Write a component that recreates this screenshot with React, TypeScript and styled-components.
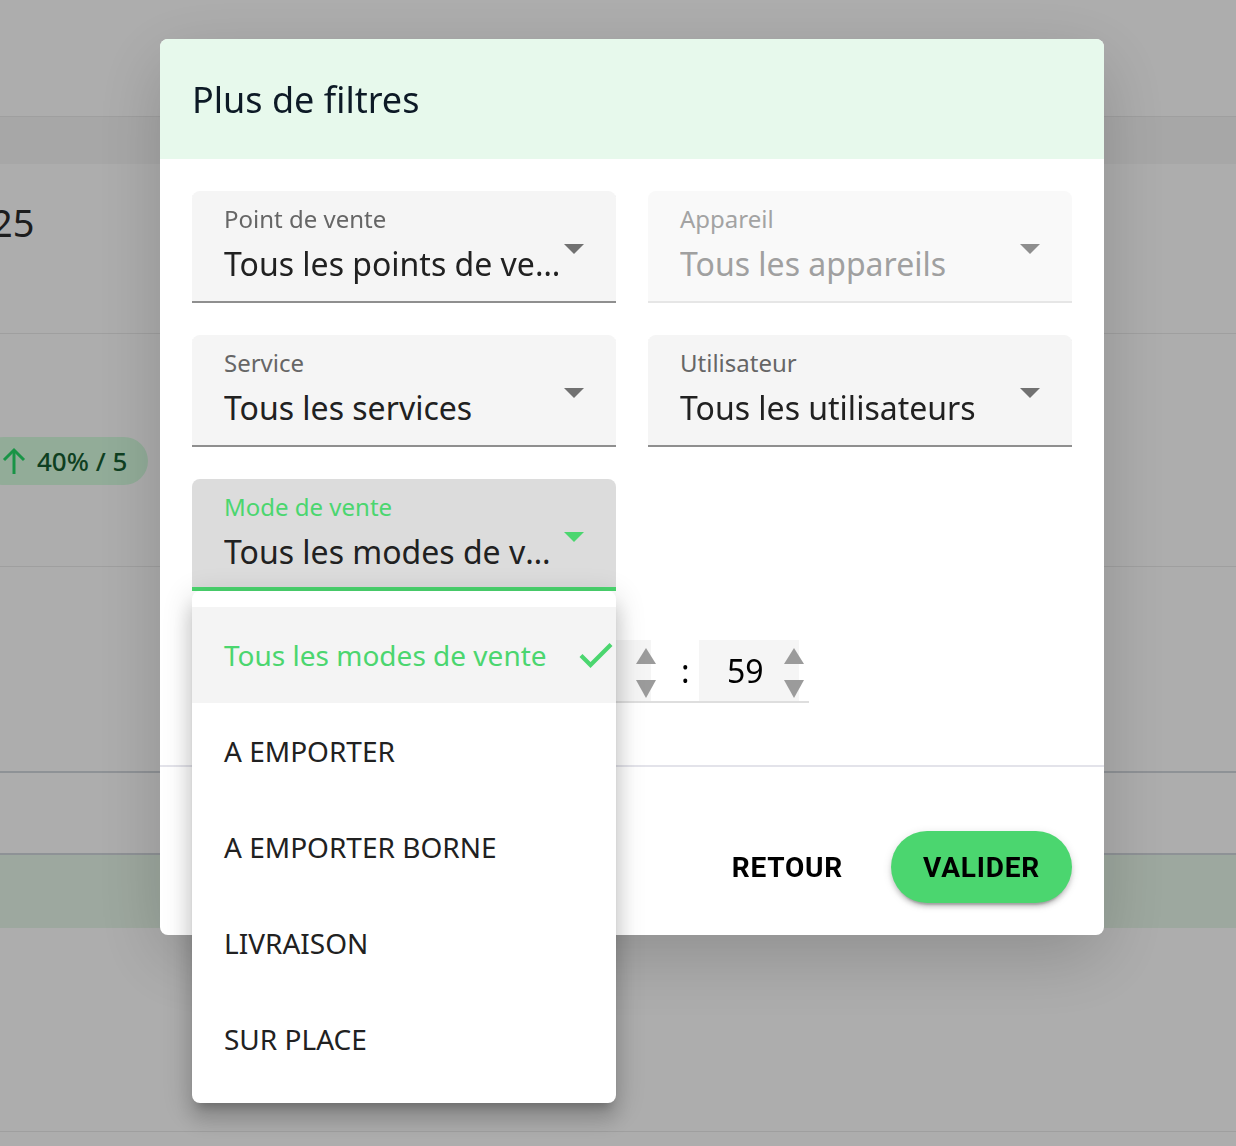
import { FC, ReactNode } from 'react';
import { styled, createGlobalStyle } from 'styled-components';

const GREEN = '#4bd66f';

type SelectState = 'idle' | 'disabled' | 'focused';

const MODES = ['Tous les modes de vente', 'A EMPORTER', 'A EMPORTER BORNE', 'LIVRAISON', 'SUR PLACE'];

const Select: FC<SelectProps> = ({ label, value, state = 'idle', children }) => (
	<Field $raised={!!children}>
		<SelectBox $state={state}>
			<SelectText>
				<Label $state={state}>{label}</Label>
				<Value $state={state}>{value}</Value>
			</SelectText>
			<Caret $state={state} />
		</SelectBox>
		{children}
	</Field>
);

const TimeInput: FC<{ value: string }> = ({ value }) => (
	<TimeBox>
		{value}
		<Spinner>
			<SpinUp />
			<SpinDown />
		</Spinner>
	</TimeBox>
);

const CheckIcon = () => (
	<svg width="34" height="26" viewBox="0 0 34 26" fill="none">
		<polyline points="2,13.5 11.5,23 32,2.5" stroke={GREEN} strokeWidth="4.2" />
	</svg>
);

const ArrowUpIcon = () => (
	<svg width="24" height="28" viewBox="0 0 24 28" fill="none">
		<polyline points="2,13 12,3 22,13" stroke="#26da68" strokeWidth="3" />
		<line x1="12" y1="3" x2="12" y2="27" stroke="#26da68" strokeWidth="3" />
	</svg>
);

export default function App() {
	return (
		<>
			<GlobalStyle />
			<Page>
				<TopBar />
				<TableHead />
				<Row $h={169}>
					<BigNumber>25</BigNumber>
				</Row>
				<Row $h={232}>
					<Badge>
						<ArrowUpIcon />
						40% / 5
					</Badge>
				</Row>
				<Row $h={204} $line="#d2d7dd" $lineW={2} />
				<Row $h={80} $line="#d2d7dd" $lineW={2} />
				<Row $h={72} $bg="#e8f8ea" />
				<Row $h={203} />
			</Page>

			<Overlay>
				<Dialog>
					<DialogHeader>
						<Title>Plus de filtres</Title>
					</DialogHeader>

					<DialogBody>
						<Select label="Point de vente" value="Tous les points de vente" />
						<Select label="Appareil" value="Tous les appareils" state="disabled" />
						<Select label="Service" value="Tous les services" />
						<Select label="Utilisateur" value="Tous les utilisateurs" />
						<Select label="Mode de vente" value="Tous les modes de vente" state="focused">
							<Menu>
								{MODES.map((mode, i) => (
									<MenuItem key={mode} $selected={i === 0}>
										{mode}
										{i === 0 && (
											<CheckWrap>
												<CheckIcon />
											</CheckWrap>
										)}
									</MenuItem>
								))}
							</Menu>
						</Select>

						<TimeRow>
							<TimeGroup>
								<TimeInput value="00" />
								<Colon>:</Colon>
								<TimeInput value="00" />
								<TimeSep>à</TimeSep>
								<TimeInput value="23" />
								<Colon>:</Colon>
								<TimeInput value="59" />
							</TimeGroup>
						</TimeRow>
					</DialogBody>

					<DialogFooter>
						<TextButton>Retour</TextButton>
						<PrimaryButton>Valider</PrimaryButton>
					</DialogFooter>
				</Dialog>
			</Overlay>
		</>
	);
}

interface SelectProps {
	label: string;
	value: string;
	state?: SelectState;
	children?: ReactNode;
}

const GlobalStyle = createGlobalStyle`
	html, body {
		margin: 0;
		padding: 0;
	}

	body {
		width: 1236px;
		height: 1146px;
		overflow: hidden;
		font-family: "Noto Sans", "Open Sans", sans-serif;
		background: #fff;
	}

	* {
		box-sizing: border-box;
	}
`;

/* page behind the modal */

const Page = styled.div`
	display: flex;
	flex-direction: column;
	height: 1146px;
	overflow: hidden;
	background: #fff;
`;

const TopBar = styled.div`
	flex: none;
	height: 117px;
	border-bottom: 1px solid #eaeaea;
`;

const TableHead = styled.div`
	flex: none;
	height: 47px;
	background: #f7f7f7;
`;

const Row = styled.div<{ $h: number; $line?: string; $lineW?: number; $bg?: string }>`
	flex: none;
	height: ${({ $h, $lineW = 1 }) => $h + $lineW}px;
	background: ${({ $bg }) => $bg ?? 'transparent'};
	border-bottom: ${({ $lineW = 1 }) => $lineW}px solid ${({ $line }) => $line ?? '#ebebeb'};
	${({ $bg }) => ($bg ? 'border-bottom: none;' : '')}
`;

const BigNumber = styled.div`
	margin: 32px 0 0 -9px;
	font-size: 38px;
	line-height: 52px;
	color: #2b2b2b;
`;

const Badge = styled.div`
	display: inline-flex;
	align-items: center;
	gap: 11px;
	height: 48px;
	margin: 103px 0 0 -20px;
	padding: 0 21px 0 22px;
	border-radius: 24px;
	background: #d7fee1;
	color: #165e31;
	font-size: 26px;
	font-weight: 500;
`;

/* modal */

const Overlay = styled.div`
	position: fixed;
	inset: 0;
	display: flex;
	align-items: flex-start;
	padding: 39px 0 0 160px;
	background: rgba(0, 0, 0, 0.32);
`;

const Dialog = styled.div`
	display: flex;
	flex-direction: column;
	width: 944px;
	height: 896px;
	border-radius: 8px;
	background: #fff;
	box-shadow: 0 22px 70px rgba(0, 0, 0, 0.18);
`;

const DialogHeader = styled.div`
	display: flex;
	align-items: center;
	flex: none;
	height: 120px;
	padding: 0 32px;
	border-radius: 8px 8px 0 0;
	background: #e7f9ec;
`;

const Title = styled.h2`
	margin: 0;
	font-size: 36px;
	font-weight: 400;
	color: #0d1a26;
`;

const DialogBody = styled.div`
	display: grid;
	grid-template-columns: 424px 424px;
	column-gap: 32px;
	row-gap: 32px;
	padding: 32px;
	border-bottom: 2px solid #e3e3ea;
`;

const Field = styled.div<{ $raised: boolean }>`
	position: relative;
	z-index: ${({ $raised }) => ($raised ? 5 : 'auto')};
`;

const SelectBox = styled.div<{ $state: SelectState }>`
	display: flex;
	align-items: center;
	height: 112px;
	border-radius: 8px 8px 0 0;
	background: ${({ $state }) =>
		$state === 'focused' ? '#dcdcdc' : $state === 'disabled' ? '#f9f9f9' : '#f5f5f5'};
	box-shadow: inset 0
		${({ $state }) =>
			$state === 'focused' ? `-4px 0 ${GREEN}` : $state === 'disabled' ? '-2px 0 #e6e6e6' : '-2px 0 #8f8f8f'};
`;

const SelectText = styled.div`
	display: flex;
	flex-direction: column;
	flex: 1;
	min-width: 0;
	align-self: stretch;
	padding: 16px 0 0 32px;
`;

const Label = styled.span<{ $state: SelectState }>`
	font-size: 24px;
	line-height: 24px;
	color: ${({ $state }) => ($state === 'focused' ? GREEN : $state === 'disabled' ? '#a3a3a3' : '#666')};
`;

const Value = styled.span<{ $state: SelectState }>`
	margin-top: 9px;
	font-size: 32px;
	line-height: 48px;
	white-space: nowrap;
	overflow: hidden;
	text-overflow: ellipsis;
	color: ${({ $state }) => ($state === 'disabled' ? '#a0a0a0' : '#212121')};
`;

const Caret = styled.span<{ $state: SelectState }>`
	flex: none;
	width: 0;
	height: 0;
	margin: 4px 32px 0 0;
	border-left: 10px solid transparent;
	border-right: 10px solid transparent;
	border-top: 10px solid
		${({ $state }) => ($state === 'focused' ? GREEN : $state === 'disabled' ? '#8e8e8e' : '#717171')};
`;

const Menu = styled.ul`
	position: absolute;
	top: 100%;
	left: 0;
	width: 100%;
	margin: 0;
	padding: 16px 0;
	list-style: none;
	border-radius: 8px;
	background: #fff;
	box-shadow: 0 10px 10px -6px rgba(0, 0, 0, 0.2), 0 16px 20px 2px rgba(0, 0, 0, 0.14),
		0 6px 28px 4px rgba(0, 0, 0, 0.12);
`;

const MenuItem = styled.li<{ $selected?: boolean }>`
	display: flex;
	align-items: center;
	height: 96px;
	padding: 0 3px 0 32px;
	font-size: 28px;
	white-space: nowrap;
	color: ${({ $selected }) => ($selected ? GREEN : '#212121')};
	background: ${({ $selected }) => ($selected ? '#f4f4f4' : '#fff')};
`;

const CheckWrap = styled.span`
	display: flex;
	margin-left: auto;
`;

const TimeRow = styled.div`
	grid-column: 1 / -1;
	height: 110px;
	padding-top: 17px;
`;

const TimeGroup = styled.div`
	display: inline-flex;
	align-items: center;
	padding-right: 10px;
	border-bottom: 2px solid #dedede;
`;

const TimeBox = styled.div`
	display: flex;
	align-items: center;
	width: 100px;
	height: 61px;
	padding-left: 28px;
	background: #f5f5f5;
	font-size: 32px;
	color: #000;
`;

const Spinner = styled.div`
	display: flex;
	flex-direction: column;
	gap: 16px;
	margin: 5px -5px 0 auto;
`;

const SpinUp = styled.span`
	width: 0;
	height: 0;
	border-left: 10px solid transparent;
	border-right: 10px solid transparent;
	border-bottom: 16px solid #9b9b9b;
`;

const SpinDown = styled.span`
	width: 0;
	height: 0;
	border-left: 10px solid transparent;
	border-right: 10px solid transparent;
	border-top: 18px solid #9b9b9b;
`;

const Colon = styled.span`
	width: 48px;
	padding-left: 30px;
	font-size: 32px;
	color: #000;
`;

const TimeSep = styled.span`
	width: 111px;
	text-align: center;
	font-size: 32px;
	color: #212121;
`;

const DialogFooter = styled.div`
	display: flex;
	justify-content: flex-end;
	align-items: center;
	gap: 32px;
	padding: 64px 32px 32px;
`;

const ButtonBase = styled.button`
	height: 72px;
	border: none;
	font-family: Roboto, "Noto Sans", sans-serif;
	font-size: 28px;
	font-weight: 700;
	letter-spacing: 0.8px;
	text-transform: uppercase;
	color: #000;
	cursor: pointer;
`;

const TextButton = styled(ButtonBase)`
	padding: 0 16px;
	background: transparent;
`;

const PrimaryButton = styled(ButtonBase)`
	padding: 0 32px;
	border-radius: 36px;
	background: ${GREEN};
	box-shadow: 0 6px 2px -4px rgba(0, 0, 0, 0.2), 0 4px 4px 0 rgba(0, 0, 0, 0.14),
		0 2px 10px 0 rgba(0, 0, 0, 0.12);
`;
